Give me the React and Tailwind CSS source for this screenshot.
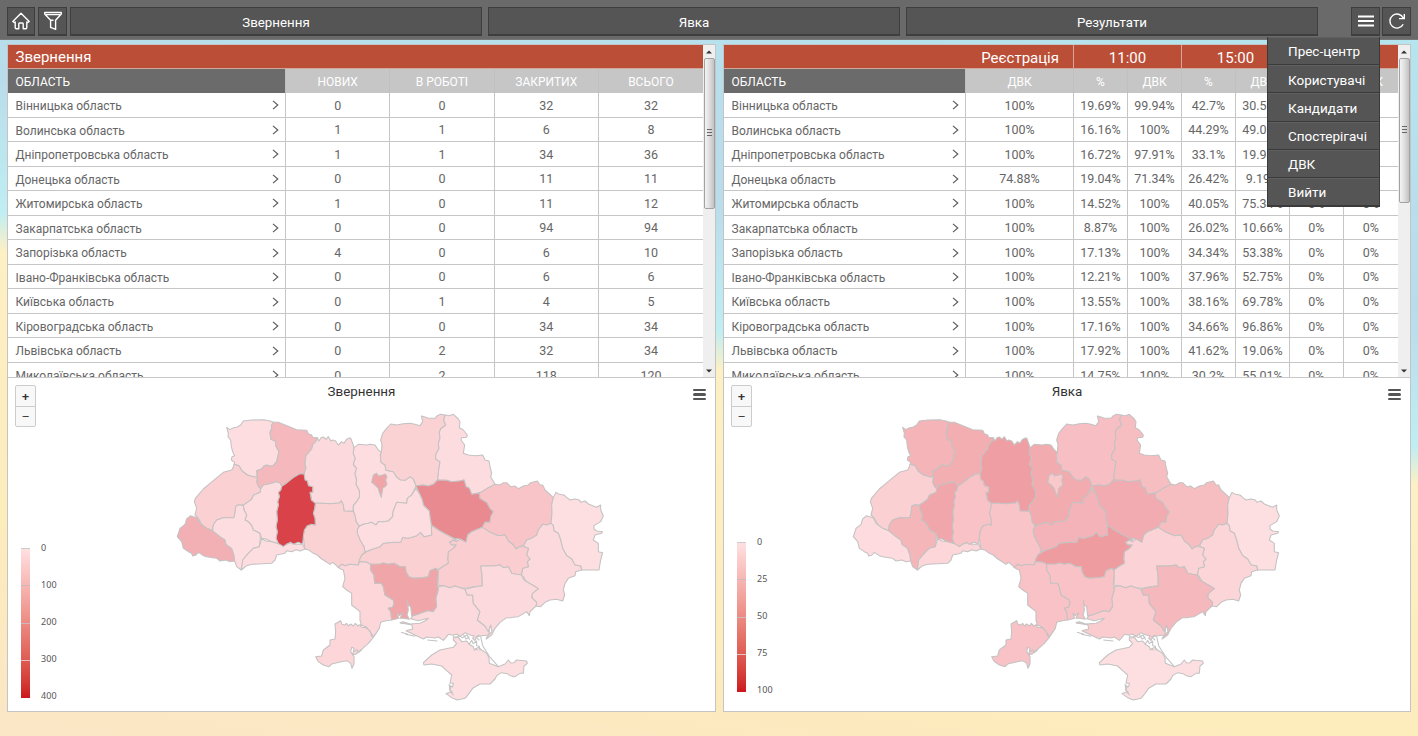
import React from "react";

const REGIONS = [
  { id: "volyn", a: "#fddde0", b: "#f4b4b8", d: "170,67 180,74 186,70 202,66 212,60 220,48 245,45 282,44 300,48 310,52 304,62 306,68 300,82 303,103 316,108 318,124 327,140 325,148 320,170 310,182 300,184 290,180 282,183 275,192 260,197 262,215 252,216 232,210 216,198 207,182 192,178 194,172 184,165 186,155 194,152 188,140 184,125 182,105 174,96 175,84" },
  { id: "rivne", a: "#f5b9bd", b: "#f3aeb2", d: "310,52 325,52 345,60 362,67 380,74 410,76 415,86 425,90 428,97 442,98 440,106 428,120 425,132 408,152 405,175 408,190 402,206 388,207 370,218 345,238 335,244 330,234 320,230 300,236 280,240 275,250 266,245 260,232 262,215 260,197 275,192 282,183 290,180 300,184 310,182 320,170 325,148 327,140 318,124 316,108 303,103 300,82 306,68 304,62" },
  { id: "zhytomyr", a: "#fcd9dc", b: "#ef9fa4", d: "442,98 447,108 453,98 460,96 468,103 475,95 483,108 488,105 497,108 505,120 515,110 522,115 528,105 535,100 542,99 548,115 552,128 550,145 556,160 550,178 560,190 555,205 560,225 558,238 568,256 569,275 560,290 550,302 550,318 540,319 522,318 520,300 514,288 508,294 480,296 455,295 436,295 424,285 424,276 420,262 428,262 428,245 415,242 412,228 405,225 402,206 408,190 405,175 408,152 425,132 428,120 440,106" },
  { id: "kyivska", a: "#fddde0", b: "#f2abaf", d: "552,128 565,118 590,120 600,118 615,120 625,135 634,142 631,150 633,172 645,180 648,196 670,200 680,216 690,224 705,226 720,215 730,222 738,242 735,250 725,270 712,280 710,295 695,293 680,292 675,305 669,320 668,335 655,348 640,350 625,350 618,360 605,352 595,355 580,358 568,364 558,350 556,335 550,318 550,302 560,290 569,275 568,256 558,238 560,225 555,205 560,190 550,178 556,160 550,145" },
  { id: "kyiv", a: "#f0a5a9", b: "#f9c8cb", d: "610,210 620,205 625,213 638,210 646,207 651,215 647,225 651,238 645,245 638,250 634,277 628,262 625,250 615,240 605,232" },
  { id: "chernihiv", a: "#fbd2d4", b: "#f7bfc3", d: "634,142 636,118 632,105 638,85 650,70 662,57 680,60 700,56 720,55 735,58 750,62 758,50 754,33 765,36 775,40 795,40 802,32 812,28 825,30 821,45 827,60 812,72 808,82 810,100 805,115 807,130 797,150 797,162 810,170 806,195 803,225 790,238 775,243 760,240 738,242 730,222 720,215 705,226 690,224 680,216 670,200 648,196 645,180 633,172 631,150" },
  { id: "sumy", a: "#fddce0", b: "#f7bec2", d: "825,30 838,32 850,28 865,42 870,50 868,68 880,75 892,90 890,97 875,98 873,105 884,120 880,145 895,150 915,152 938,150 945,165 957,168 960,185 965,205 962,215 975,238 970,243 955,248 932,262 905,268 898,250 888,245 882,225 868,228 845,230 830,226 803,225 806,195 810,170 797,162 797,150 807,130 805,115 810,100 808,82 812,72 827,60 821,45" },
  { id: "poltava", a: "#e88a8f", b: "#f2abb0", d: "738,242 760,240 775,243 790,238 803,225 830,226 845,230 868,228 882,225 888,245 898,250 905,268 928,265 930,280 950,292 960,310 970,320 962,335 960,352 945,352 937,367 905,380 893,390 888,412 870,402 850,400 842,395 822,385 805,375 784,360 780,335 778,318 760,300 757,285 748,265" },
  { id: "kharkiv", a: "#f8c4c8", b: "#f7bec2", d: "928,265 955,248 975,238 990,240 1000,233 1010,233 1022,245 1034,243 1045,251 1060,243 1075,240 1082,233 1102,228 1110,240 1118,240 1125,255 1140,268 1150,278 1145,300 1146,325 1143,355 1130,360 1118,358 1105,375 1100,390 1085,400 1070,405 1062,420 1048,425 1038,432 1030,420 1015,408 1005,390 985,392 960,382 937,367 945,352 960,352 962,335 970,320 960,310 950,292 930,280" },
  { id: "luhansk", a: "#fddfe1", b: "#fddfe1", d: "1150,278 1158,262 1168,268 1182,270 1190,277 1200,285 1215,282 1228,285 1232,292 1245,288 1255,297 1270,303 1280,307 1292,300 1292,315 1300,332 1292,350 1272,362 1272,372 1280,378 1298,380 1295,385 1275,390 1270,405 1285,415 1285,440 1298,443 1292,465 1287,495 1255,495 1235,495 1232,483 1215,480 1205,462 1190,452 1178,430 1172,405 1165,385 1152,378 1150,362 1143,355 1146,325 1145,300" },
  { id: "donetsk", a: "#fcd9dc", b: "#fcd5d9", d: "1143,355 1150,362 1152,378 1165,385 1172,405 1178,430 1190,452 1205,462 1215,480 1232,483 1235,495 1217,500 1215,512 1195,520 1185,535 1180,555 1184,570 1178,588 1160,583 1140,585 1125,592 1112,605 1098,603 1100,592 1085,578 1087,565 1105,551 1092,543 1070,532 1060,515 1054,510 1058,490 1075,485 1072,470 1080,462 1070,450 1075,430 1062,425 1062,420 1070,405 1085,400 1100,390 1105,375 1118,358 1130,360" },
  { id: "dnipro", a: "#faced0", b: "#fbd2d5", d: "937,367 960,382 985,392 1005,390 1015,408 1030,420 1038,432 1048,425 1062,425 1075,430 1070,450 1080,462 1072,470 1075,485 1058,490 1054,510 1040,508 1025,505 1015,485 1000,488 990,480 970,483 932,483 936,510 937,543 910,545 890,550 870,548 855,543 840,548 820,542 803,540 805,520 803,495 820,483 835,475 833,460 835,440 850,430 858,420 845,420 838,412 850,405 860,410 870,402 888,412 893,390 905,380" },
  { id: "kirovohrad", a: "#fbd0d2", b: "#ef9ca1", d: "565,468 575,450 590,440 600,435 630,425 640,415 670,412 692,412 698,397 710,400 720,398 730,395 740,392 752,382 762,395 785,390 784,360 805,375 822,385 842,395 862,406 850,405 838,412 845,420 858,420 850,430 835,440 833,460 835,475 820,483 803,495 798,490 780,497 775,515 755,518 730,520 716,515 708,500 706,485 690,485 672,475 655,478 640,474 630,477 602,478 590,472" },
  { id: "cherkasy", a: "#fddde0", b: "#f4b3b8", d: "568,364 580,358 595,355 605,352 618,360 625,350 640,350 655,348 668,335 669,320 675,305 680,292 695,293 710,295 712,280 725,270 738,250 748,265 757,285 760,300 778,318 780,335 784,360 785,390 762,395 752,382 740,392 730,395 720,398 710,400 698,397 692,412 670,412 640,415 630,425 600,435 585,442 582,425 570,405 562,385 562,372" },
  { id: "vinnytsia", a: "#fbd2d4", b: "#f8c4c8", d: "436,295 455,295 480,296 508,294 514,288 520,300 522,318 540,319 550,318 556,335 558,350 568,364 562,372 562,385 570,405 582,425 585,442 575,450 568,465 565,480 540,478 525,482 515,478 505,488 498,480 488,472 480,478 465,468 455,462 442,450 430,445 418,436 405,432 403,420 400,395 403,375 412,362 425,358 436,360 435,340 430,325 434,310" },
  { id: "khmelnytskyi", a: "#d84248", b: "#f8c2c6", d: "335,244 345,238 370,218 388,207 402,206 405,225 412,228 415,242 428,245 428,262 420,262 424,285 436,295 434,310 430,325 435,340 436,360 425,358 412,362 403,375 400,395 398,418 385,412 370,418 362,412 350,418 340,425 325,416 318,400 322,380 318,365 322,345 320,320 325,300 323,290 328,275 325,262 332,255" },
  { id: "ternopil", a: "#fddde0", b: "#f1a6ab", d: "335,244 332,255 325,262 328,275 323,290 325,300 320,320 322,345 318,365 322,380 318,400 325,416 305,410 288,402 275,400 270,385 250,375 245,362 235,350 225,345 230,330 222,315 220,300 235,290 245,282 250,270 270,262 272,252 280,240 300,236 320,230 330,234" },
  { id: "lviv", a: "#fbd0d3", b: "#fbd0d3", d: "192,178 207,182 216,198 232,210 252,216 262,215 260,232 266,245 272,252 270,262 250,270 245,282 235,290 220,300 207,299 197,304 196,318 192,338 160,338 140,345 130,360 128,377 110,370 95,358 85,340 75,330 80,310 73,290 76,280 100,252 120,235 160,202 185,195 190,185" },
  { id: "zakarpattia", a: "#f3b0b4", b: "#fddbdf", d: "62,332 70,335 82,338 90,355 110,370 128,377 150,395 165,405 168,418 185,430 192,450 194,468 180,470 168,465 150,468 140,460 128,458 110,455 100,452 85,442 78,450 68,453 65,445 55,440 40,430 35,410 22,395 30,370 45,358 50,342" },
  { id: "ivanofrankivsk", a: "#fddde0", b: "#f5b6ba", d: "128,377 130,360 140,345 160,338 192,338 196,318 197,304 207,299 220,302 222,315 230,330 225,345 235,350 245,362 250,375 270,385 271,400 268,425 250,430 235,445 220,462 214,495 200,485 194,468 192,450 185,430 168,418 165,405 150,395" },
  { id: "chernivtsi", a: "#fddde0", b: "#fcd6d9", d: "214,495 218,465 235,445 250,430 268,425 275,400 288,408 305,410 325,416 340,425 350,418 362,413 370,418 398,418 405,432 390,438 378,434 365,440 350,437 345,445 320,450 315,465 305,475 245,478 230,482" },
  { id: "odesa", a: "#fcd6d9", b: "#f8c2c6", d: "505,487 515,478 525,482 540,478 565,480 568,470 590,472 602,478 602,495 612,510 614,535 635,535 640,545 645,570 670,585 672,595 668,607 655,610 662,620 665,645 648,647 632,652 628,670 610,697 595,715 575,733 558,747 548,750 552,730 545,727 542,740 552,755 552,777 546,790 542,775 530,767 510,771 485,777 477,785 460,780 445,770 437,755 455,753 460,735 480,720 480,705 495,702 497,680 495,657 512,647 516,658 524,660 530,655 535,663 542,657 550,663 556,655 564,663 570,659 575,667 588,668 600,678 605,693 611,696 600,680 590,667 574,660 570,645 570,620 545,600 545,565 530,555 518,545 525,520 520,495 512,492" },
  { id: "mykolaiv", a: "#f0a5a9", b: "#f8c2c6", d: "602,478 630,477 640,474 655,478 672,475 690,485 706,485 708,500 716,515 730,520 755,518 775,515 780,497 798,490 805,500 802,535 805,555 798,580 800,605 790,620 775,617 760,622 745,628 725,633 722,605 714,600 712,585 715,615 711,630 718,643 700,640 690,640 698,624 688,632 681,625 686,640 665,645 662,620 655,610 668,607 672,595 670,585 645,570 640,545 635,535 614,535 612,510 602,495" },
  { id: "kherson", a: "#fcd9dc", b: "#faccd0", d: "805,545 820,542 840,548 855,543 870,548 885,553 892,570 908,570 910,595 930,620 922,645 945,663 958,675 957,690 935,692 920,695 915,707 908,700 912,692 900,690 885,683 870,695 860,687 850,691 835,688 828,697 820,706 805,696 795,699 770,696 760,702 730,688 708,677 728,672 726,660 690,653 700,650 720,657 750,655 765,648 775,640 745,647 722,641 728,633 745,628 760,622 775,617 790,620 800,605 798,580 805,555" },
  { id: "zaporizhzhia", a: "#fcd9dc", b: "#f5b8bc", d: "885,553 910,547 930,543 937,543 936,510 932,483 970,483 990,480 1000,488 1015,485 1025,505 1040,508 1055,510 1062,525 1092,543 1105,551 1087,565 1085,578 1100,592 1098,603 1080,620 1078,632 1070,620 1045,635 1035,636 1022,638 1010,638 990,652 975,670 965,690 948,702 955,690 966,680 962,660 955,680 945,663 922,645 930,620 910,595 908,570 892,570" },
  { id: "crimea", a: "#fddfe1", b: "#fddfe1", d: "850,695 865,697 875,710 890,708 898,718 910,725 913,735 925,727 935,735 950,745 957,758 958,775 985,785 1005,777 1015,765 1022,774 1032,773 1040,765 1070,768 1072,775 1062,783 1060,805 1050,805 1035,815 1020,812 1012,806 995,803 980,812 975,822 960,837 930,837 908,850 895,868 885,880 862,885 845,878 828,866 842,860 850,870 840,855 838,842 848,845 850,835 840,835 845,810 830,797 815,783 785,777 762,780 760,773 785,750 810,735 850,727 860,715 850,705" },
];

const DETAILS =
  "M690,653 l14,3 M693,682 l22,6 M706,688 l30,6 M772,705 l30,3 M855,700 l12,-8 l10,6 l14,-8 l8,14 M880,688 l8,14 l10,-6 M897,718 l8,-12 l5,10 l10,-8 l0,14 l8,2 l2,12 M915,730 l8,6 M932,694 l6,28 l20,32 l27,31 M928,690 l-10,6 l10,10 M552,740 l8,-6 l6,8 l10,-8 M836,838 l8,8 l-6,8 l10,8";

function UkraineMap({ series, className }) {
  return (
    <svg className={className} width="440" height="300" viewBox="0 0 1320 900">
      <g stroke="#c4c2c2" strokeWidth="3.2" strokeLinejoin="round">
        {REGIONS.map((r) => (
          <polygon key={r.id} points={r.d} fill={r[series]} />
        ))}
        <path d={DETAILS} fill="none" />
      </g>
    </svg>
  );
}

const NAMES = [
  "Вінницька область", "Волинська область", "Дніпропетровська область", "Донецька область",
  "Житомирська область", "Закарпатська область", "Запорізька область", "Івано-Франківська область",
  "Київська область", "Кіровоградська область", "Львівська область", "Миколаївська область",
];

const APPEALS = [
  [0, 0, 32, 32], [1, 1, 6, 8], [1, 1, 34, 36], [0, 0, 11, 11], [1, 0, 11, 12], [0, 0, 94, 94],
  [4, 0, 6, 10], [0, 0, 6, 6], [0, 1, 4, 5], [0, 0, 34, 34], [0, 2, 32, 34], [0, 2, 118, 120],
];

const TURNOUT = [
  ["100%", "19.69%", "99.94%", "42.7%", "30.59%", "0%", "0%"],
  ["100%", "16.16%", "100%", "44.29%", "49.01%", "0%", "0%"],
  ["100%", "16.72%", "97.91%", "33.1%", "19.96%", "0%", "0%"],
  ["74.88%", "19.04%", "71.34%", "26.42%", "9.19%", "0%", "0%"],
  ["100%", "14.52%", "100%", "40.05%", "75.34%", "0%", "0%"],
  ["100%", "8.87%", "100%", "26.02%", "10.66%", "0%", "0%"],
  ["100%", "17.13%", "100%", "34.34%", "53.38%", "0%", "0%"],
  ["100%", "12.21%", "100%", "37.96%", "52.75%", "0%", "0%"],
  ["100%", "13.55%", "100%", "38.16%", "69.78%", "0%", "0%"],
  ["100%", "17.16%", "100%", "34.66%", "96.86%", "0%", "0%"],
  ["100%", "17.92%", "100%", "41.62%", "19.06%", "0%", "0%"],
  ["100%", "14.75%", "100%", "30.2%", "55.01%", "0%", "0%"],
];

function Rows({ cols, data }) {
  return NAMES.map((name, i) => (
    <div key={name} className={`grid h-[24.55px] shrink-0 ${cols} text-[12.5px] text-[#666]`}>
      <div className="flex items-center justify-between border-b border-[#c6c6c6] pl-[7.5px] pr-[6.5px] pt-[2.5px]">
        <span className="whitespace-nowrap text-[12px]">{name}</span>
        <svg className="mb-[1.5px]" width="7" height="10" viewBox="0 0 7 10" fill="none" stroke="#555" strokeWidth="1.1">
          <path d="M1 0.8 L5.8 5 L1 9.2" />
        </svg>
      </div>
      {data[i].map((v, j) => (
        <div key={j} className="flex items-center justify-center border-b border-l border-[#c6c6c6] pt-[2.5px]">
          {v}
        </div>
      ))}
    </div>
  ));
}

function HeadRow({ cols, labels }) {
  return (
    <div className={`grid h-[24px] shrink-0 ${cols} text-[12px] text-white`}>
      <div className="flex items-center bg-[#6b6b6b] pl-[7.5px] pt-px">ОБЛАСТЬ</div>
      {labels.map((l, i) => (
        <div key={i} className="flex items-center justify-center border-l border-[#c0c0c0] bg-[#c6c6c6] pt-px">
          {l}
        </div>
      ))}
    </div>
  );
}

function Scrollbar({ thumb, grip }) {
  return (
    <div className="flex w-3 shrink-0 flex-col items-center bg-[#efefef]">
      <div className="flex h-[13px] items-center">
        <svg width="6" height="4" viewBox="0 0 6 4"><path d="M3 0.5 L6 3.5 H0z" fill="#333" /></svg>
      </div>
      <div className={`w-[11px] ${thumb} rounded-[2px] border border-[#a2a2a2] bg-linear-to-r from-[#f4f4f4] via-[#dedede] to-[#c2c2c6]`}>
        <div className={`ml-[2px] ${grip} h-[7px] w-[5px] border-y border-[#666] py-[2px]`}>
          <div className="h-px bg-[#666]" />
        </div>
      </div>
      <div className="flex-1" />
      <div className="flex h-[13px] items-center">
        <svg width="6" height="4" viewBox="0 0 6 4"><path d="M3 3.5 L6 0.5 H0z" fill="#333" /></svg>
      </div>
    </div>
  );
}

function Chart({ title, series, ticks, mapClass, legendClass, menuClass }) {
  return (
    <div className="relative h-[334px] shrink-0 border-t border-[#c9c9c9] bg-white">
      <h2 className="pt-[5px] text-center text-[13.4px] leading-[17px] text-[#333]">{title}</h2>
      <UkraineMap series={series} className={`absolute top-[27px] ${mapClass}`} />
      <div className="absolute left-[7px] top-[7px] flex w-[21px] flex-col rounded-[2px] border border-[#ccc] bg-[#f8f8f8] text-center font-['Open_Sans',sans-serif] text-[13px] font-bold leading-[19px] text-[#333]">
        <div className="h-[21px] border-b border-[#ccc] leading-[21px]">+</div>
        <div className="h-[19px] font-normal">−</div>
      </div>
      <div className={`absolute top-[11px] flex w-[13px] flex-col gap-[2px] ${menuClass}`}>
        <div className="h-[2.4px] rounded-full bg-[#555]" />
        <div className="h-[2.4px] rounded-full bg-[#555]" />
        <div className="h-[2.4px] rounded-full bg-[#555]" />
      </div>
      <div className={`absolute left-[13px] flex gap-[11px] ${legendClass}`}>
        <div className="flex h-[150px] w-[9px] flex-col justify-between border-t border-[#ccc] bg-linear-to-b from-[#fee0e2] to-[#cc141b]">
          <div className="h-0" />
          <div className="h-px bg-[#cbb9bb]" />
          <div className="h-px bg-[#cbb9bb]" />
          <div className="h-px bg-[#e3c0c2]" />
          <div className="h-0" />
        </div>
        <div className="-mt-[7px] flex h-[162.5px] flex-col justify-between font-['Noto_Sans',sans-serif] text-[9px] leading-[14px] tracking-[0.1px] text-[#555]">
          {ticks.map((t) => <span key={t}>{t}</span>)}
        </div>
      </div>
    </div>
  );
}

function BarButton({ className, children }) {
  return (
    <div className={`flex h-[29px] items-center justify-center border border-b-2 border-[#3e3e3e] bg-[#555] text-[13.3px] text-white ${className}`}>
      {children}
    </div>
  );
}

const LEFT_COLS = "grid-cols-[277px_104.3px_104.3px_104.3px_105.1px]";
const RIGHT_COLS = "grid-cols-[241px_108px_54px_54px_54px_54px_53.5px_55.5px]";
const MENU = ["Прес-центр", "Користувачі", "Кандидати", "Спостерігачі", "ДВК", "Вийти"];

export default function App() {
  return (
    <div className="relative flex h-[736px] w-[1418px] flex-col overflow-hidden bg-[linear-gradient(189.4deg,#b4e6ee_0%,#b9dcea_32%,#bfeef3_46%,#fdf0c4_50%,#fdecbc_78%,#fbe6c6_100%)] font-[Roboto,sans-serif]">
      <header className="flex h-10 shrink-0 items-start border-b border-[#777] bg-[#6a6a6a] pt-[7px] pl-[7px]">
        <BarButton className="mr-[3px] w-[28px]">
          <svg width="20" height="20" viewBox="0 0 20 20" fill="none" stroke="#fff" strokeWidth="1.4" strokeLinejoin="round" strokeLinecap="round">
            <path d="M1.8 10.5 L10 2.3 L18.2 10.5 L16.5 11.6 L15.8 11 V16.5 Q15.8 17.7 14.8 17.7 H12.2 V12.8 Q12.2 12 11.4 12 H8.6 Q7.8 12 7.8 12.8 V17.7 H5.2 Q4.2 17.7 4.2 16.5 V11 L3.5 11.6 Z" />
          </svg>
        </BarButton>
        <BarButton className="mr-[3px] w-[29px]">
          <svg width="20" height="20" viewBox="0 0 20 20" fill="none" stroke="#fff" strokeWidth="1.4" strokeLinejoin="round">
            <path d="M1.7 1.5 H18.3 V3 L12.6 9.2 V18.4 L7.6 16.4 V9.2 L1.7 3 Z M3 3.6 H17 M7.6 9.2 H10.5" />
          </svg>
        </BarButton>
        <BarButton className="mr-[6px] w-[412px] pt-[3px]">Звернення</BarButton>
        <BarButton className="mr-[6px] w-[412px] pt-[3px]">Явка</BarButton>
        <BarButton className="mr-[33px] w-[412px] pt-[3px]">Результати</BarButton>
        <BarButton className="mr-[2px] w-[29px]">
          <svg width="16" height="12" viewBox="0 0 16 12" stroke="#fff" strokeWidth="2"><path d="M0 1.5H16 M0 6H16 M0 10.5H16" /></svg>
        </BarButton>
        <BarButton className="w-[29px]">
          <svg width="18" height="18" viewBox="0 0 18 18" fill="none" stroke="#fff" strokeWidth="1.4">
            <path d="M15.2 12.2 A7 7 0 1 1 15.3 6.2 M11 6.6 H16.3 V2" />
          </svg>
        </BarButton>
      </header>

      <main className="flex gap-2 pl-[7px] pt-1">
        <section className="flex w-[709px] flex-col border border-[#c4c4c4] bg-white">
          <div className="flex h-[332px] shrink-0 overflow-hidden">
            <div className="flex w-[695px] flex-col overflow-hidden">
              <div className="flex h-6 shrink-0 items-center border-b border-[#d0a79b] bg-[#bb4e36] pl-[7.5px] pt-[2px] text-[15px] text-white">Звернення</div>
              <HeadRow cols={LEFT_COLS} labels={["НОВИХ", "В РОБОТІ", "ЗАКРИТИХ", "ВСЬОГО"]} />
              <Rows cols={LEFT_COLS} data={APPEALS} />
            </div>
            <Scrollbar thumb="h-[151px]" grip="mt-[70px]" />
          </div>
          <Chart title="Звернення" series="a" ticks={[0, 100, 200, 300, 400]} mapClass="left-[161.7px]" menuClass="left-[685px]" legendClass="top-[169.5px]" />
        </section>

        <section className="-ml-px flex w-[688px] flex-col border border-[#c4c4c4] bg-white">
          <div className="flex h-[332px] shrink-0 overflow-hidden">
            <div className="flex w-[674px] flex-col overflow-hidden">
              <div className="grid h-6 shrink-0 grid-cols-[349px_108px_108px_109px] border-b border-[#d0a79b] bg-[#bb4e36] text-[15px] text-white">
                <div className="flex items-center justify-end pr-[14px] pt-[2px]">Реєстрація</div>
                <div className="flex items-center justify-center border-l border-[#d8a598] pt-[2px]">11:00</div>
                <div className="flex items-center justify-center border-l border-[#d8a598] pt-[2px]">15:00</div>
                <div className="flex items-center justify-center border-l border-[#d8a598] pt-[2px]">20:00</div>
              </div>
              <HeadRow cols={RIGHT_COLS} labels={["ДВК", "%", "ДВК", "%", "ДВК", "%", "ДВК"]} />
              <Rows cols={RIGHT_COLS} data={TURNOUT} />
            </div>
            <Scrollbar thumb="h-[145px]" grip="mt-[67px]" />
          </div>
          <Chart title="Явка" series="b" ticks={[0, 25, 50, 75, 100]} mapClass="left-[122.3px]" menuClass="left-[664px]" legendClass="top-[163.5px]" />
        </section>
      </main>

      <nav className="absolute left-[1267px] top-[37px] w-[113px] border border-t-0 border-[#3a3a3a] bg-[#555] text-[13.5px] text-white">
        {MENU.map((m) => (
          <div key={m} className="flex h-[28.2px] items-center border-b border-[#3a3a3a] border-t border-t-[#606060] pl-5 pt-px">{m}</div>
        ))}
      </nav>
    </div>
  );
}
